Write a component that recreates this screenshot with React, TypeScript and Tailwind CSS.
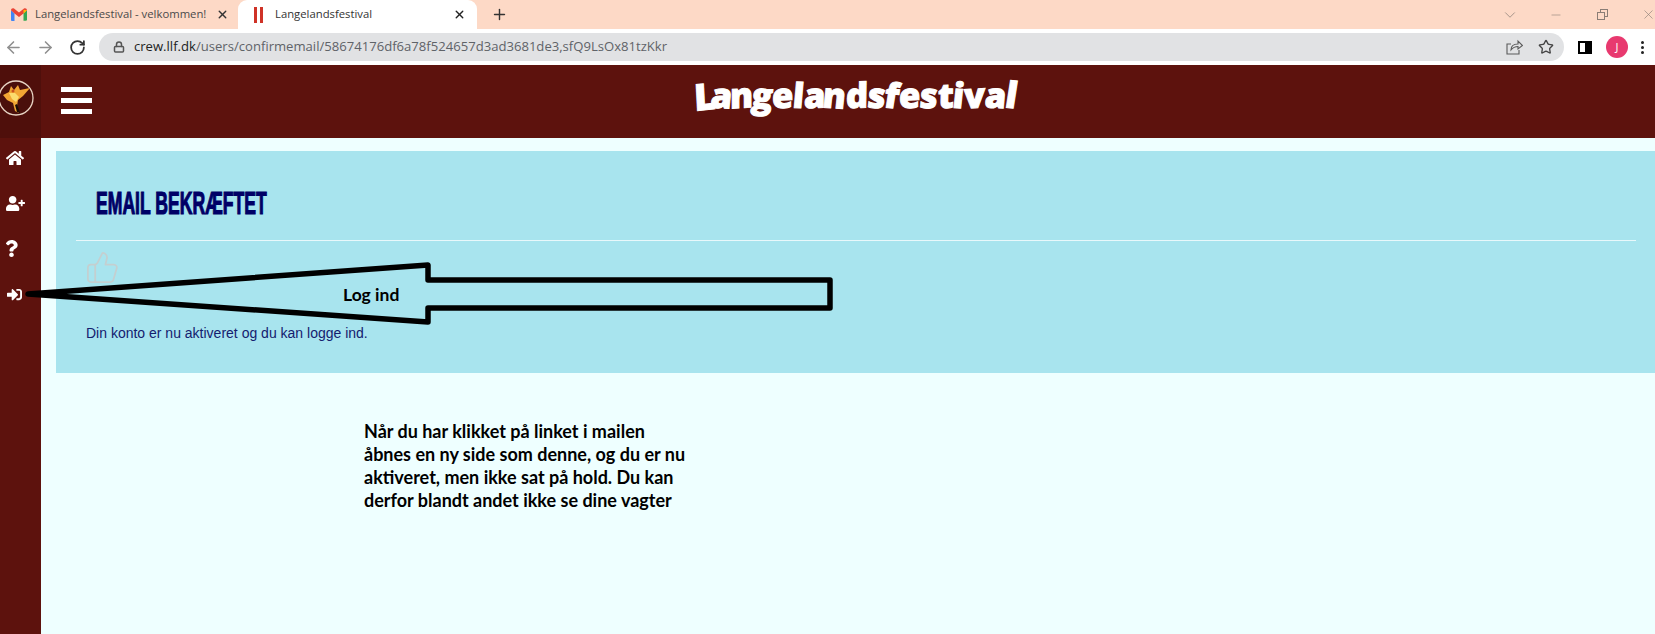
import { ArrowLeft, ArrowRight, ChevronDown, Lock, Minus, Plus, RotateCw, Star, ThumbsUp, X } from "lucide-react";
import { FaHome, FaQuestion, FaSignInAlt, FaUserPlus } from "react-icons/fa";

const logoLetters = [
  { c: "L", cls: "-rotate-6 text-[37px]" },
  { c: "a", cls: "rotate-3 -ml-[4px]" },
  { c: "n", cls: "-rotate-3 -ml-[2px]" },
  { c: "g", cls: "rotate-3 -ml-[1px]" },
  { c: "e", cls: "-rotate-3" },
  { c: "l", cls: "rotate-2" },
  { c: "a", cls: "-rotate-2" },
  { c: "n", cls: "rotate-3 -ml-[2px]" },
  { c: "d", cls: "-rotate-2" },
  { c: "s", cls: "rotate-3" },
  { c: "f", cls: "rotate-6" },
  { c: "e", cls: "-rotate-3" },
  { c: "s", cls: "rotate-2" },
  { c: "t", cls: "-rotate-2" },
  { c: "i", cls: "rotate-3" },
  { c: "v", cls: "-rotate-3" },
  { c: "a", cls: "rotate-2" },
  { c: "l", cls: "rotate-6 text-[36px]" },
];

function GmailIcon() {
  return (
    <svg width="16" height="13" viewBox="0 0 16 13" className="shrink-0">
      <path d="M0 2v9.500A1.200 1.200 0 0 0 1.200 13H3.500V5.500z" fill="#4285f4" />
      <path d="M16 2v9.500a1.200 1.200 0 0 1-1.200 1.200h-2.300V5.500z" fill="#34a853" />
      <path d="M0 2.200C0 .6 1.800-.4 3 .6l5 3.900L13 .6c1.200-1 3 0 3 1.600L12.500 5.500 8 9 3.500 5.500z" fill="#ea4335" />
      <path d="M12.500 1.700 16 2.200 12.500 5.500z" fill="#fbbc04" />
    </svg>
  );
}

function FestivalLogo() {
  return (
    <svg width="36" height="38" viewBox="0 0 36 38">
      <circle cx="16" cy="19" r="17" fill="#4a0f0b" stroke="#e8d4c4" strokeWidth="1.300" />
      <path d="M3 16l6-3 2-6 3 4 4-5 2 5 10-2-7 8-5 4-1 6 2 7-4-2-2-8-6-3z" fill="#f2a634" />
      <path d="M9 14l6 0 4 4-3 5-4-3z" fill="#fbdc6e" />
      <path d="M17 25l3 9-3-1-2-7z" fill="#1a0b06" />
      <circle cx="13" cy="12" r="1.500" fill="#c9511f" />
    </svg>
  );
}

function TabStrip() {
  return (
    <div className="flex h-[29px] shrink-0 items-stretch bg-[#fdd9c6] font-['Open_Sans',sans-serif] text-[11.300px] text-[#4a4a4a]">
      <div className="flex w-[238px] items-center pl-[11px] pr-[8px]">
        <GmailIcon />
        <span className="ml-[8px] w-[173px] whitespace-nowrap">Langelandsfestival - velkommen!</span>
        <X size={13} strokeWidth={2.500} className="ml-[8px] text-[#333]" />
      </div>
      <div className="flex w-[239px] items-center rounded-t-[9px] bg-white pl-[16px] pr-[11px]">
        <div className="flex gap-[3px]">
          <span className="h-[16px] w-[3px] bg-[#cf3227]" />
          <span className="h-[16px] w-[3px] bg-[#cf3227]" />
        </div>
        <span className="ml-[12px] flex-1 text-[#333]">Langelandsfestival</span>
        <X size={13} strokeWidth={2.500} className="text-[#222]" />
      </div>
      <div className="flex items-center pl-[14px]">
        <Plus size={17} strokeWidth={2} className="text-[#333]" />
      </div>
      <div className="-mr-[16px] ml-auto flex items-center text-[#8a7d75]">
        <div className="flex w-[46px] justify-center">
          <ChevronDown size={18} strokeWidth={1} />
        </div>
        <div className="flex w-[46px] justify-center">
          <Minus size={14} strokeWidth={1} />
        </div>
        <div className="flex w-[46px] justify-center">
          <div className="relative size-[11px]">
            <span className="absolute right-0 top-0 size-[8px] border border-[#8a7d75]" />
            <span className="absolute bottom-0 left-0 size-[8px] border border-[#8a7d75] bg-[#fdd9c6]" />
          </div>
        </div>
        <div className="flex w-[46px] justify-center">
          <X size={15} strokeWidth={1} />
        </div>
      </div>
    </div>
  );
}

function Toolbar() {
  return (
    <div className="flex h-[36px] shrink-0 items-center bg-white pl-[4px] font-['Open_Sans',sans-serif]">
      <ArrowLeft size={19} className="text-[#8f8f8f]" />
      <ArrowRight size={19} className="ml-[13px] text-[#8f8f8f]" />
      <RotateCw size={17} strokeWidth={2.500} className="ml-[14px] text-[#333]" />
      <div className="ml-[13px] flex h-[28px] w-[1465px] items-center rounded-full bg-[#e1e2e4] pl-[14px] pr-[10px]">
        <Lock size={12} strokeWidth={3} className="text-[#555]" />
        <span className="ml-[9px] text-[13.100px] text-[#5f6368]">
          <span className="text-[#222]">crew.llf.dk</span>/users/confirmemail/58674176df6a78f524657d3ad3681de3,sfQ9LsOx81tzKkr
        </span>
        <div className="ml-auto flex items-center gap-[15px]">
          <svg width="17" height="16" viewBox="0 0 17 16" fill="none" stroke="#5a5a5a" strokeWidth="1.100">
            <path d="M13 11v4H1V5h4" />
            <path d="M5 11c0-4 3-6 7-6V2l4.500 4.500L12 10V7.500c-3 0-5 1-7 3.500z" />
          </svg>
          <Star size={16} strokeWidth={2} className="text-[#444]" />
        </div>
      </div>
      <div className="ml-[14px] flex h-[13px] w-[14px] justify-end border-2 border-black bg-white">
        <span className="h-full w-[5px] bg-black" />
      </div>
      <div className="ml-[14px] flex size-[22px] items-center justify-center rounded-full bg-[#e8396f] text-[11px] text-white">J</div>
      <div className="ml-[13px] flex flex-col gap-[2px]">
        <span className="size-[3px] rounded-full bg-[#222]" />
        <span className="size-[3px] rounded-full bg-[#222]" />
        <span className="size-[3px] rounded-full bg-[#222]" />
      </div>
    </div>
  );
}

function SiteHeader() {
  return (
    <header className="flex h-[73px] shrink-0 bg-[#5d120d]">
      <div className="flex h-full w-[41px] items-center justify-start bg-[#4f0f0b] pb-[7px]">
        <FestivalLogo />
      </div>
      <div className="ml-[20px] mt-[22px] flex h-[27px] w-[31px] flex-col gap-[6px]">
        <span className="h-[5px] bg-white" />
        <span className="h-[5px] bg-white" />
        <span className="h-[5px] bg-white" />
      </div>
      <div className="ml-[602px] mt-[10px] flex h-[40px] -skew-x-3 items-center font-['Open_Sans',sans-serif] text-[34.500px] font-extrabold leading-none tracking-[-0.4px] text-white [-webkit-text-stroke:1px_#ffffff]">
        {logoLetters.map((l, i) => (
          <span key={i} className={`inline-block ${l.cls}`}>
            {l.c}
          </span>
        ))}
      </div>
    </header>
  );
}

function Sidebar() {
  return (
    <nav className="flex w-[41px] shrink-0 flex-col items-start gap-[27px] bg-[#5d120d] pl-[6px] pt-[11px] text-white">
      <FaHome size={18} />
      <FaUserPlus size={19} />
      <FaQuestion size={17} className="-ml-[3px]" />
      <FaSignInAlt size={15} className="ml-[1px] mt-[3px]" />
    </nav>
  );
}

export default function App() {
  return (
    <div className="relative flex h-[634px] w-[1655px] flex-col overflow-hidden bg-[#eeffff]">
      <TabStrip />
      <Toolbar />
      <SiteHeader />
      <div className="flex flex-1">
        <Sidebar />
        <main className="flex-1 pl-[15px] pt-[13px]">
          <section className="h-[222px] bg-[#a8e4ee] pl-[20px] pr-[19px]">
            <h1 className="ml-[20px] origin-left scale-x-[0.55] whitespace-nowrap pt-[37px] font-['Liberation_Sans',sans-serif] text-[32px] font-bold leading-[30px] text-[#000066] [-webkit-text-stroke:1.200px_#000066]">
              EMAIL BEKRÆFTET
            </h1>
            <hr className="mt-[22px] border-t border-[#e8f8fb]" />
            <ThumbsUp size={35} strokeWidth={1.200} className="ml-[9px] mt-[9px] text-[#c4cfd0]" />
            <p className="ml-[10px] mt-[39px] font-['Liberation_Sans',sans-serif] text-[14px] leading-[18px] text-[#14206e]">
              Din konto er nu aktiveret og du kan logge ind.
            </p>
          </section>
          <p className="ml-[308px] mt-[47px] font-['Lato',sans-serif] text-[18px] font-bold leading-[23px] text-black">
            Når du har klikket på linket i mailen
            <br />
            åbnes en ny side som denne, og du er nu
            <br />
            aktiveret, men ikke sat på hold. Du kan
            <br />
            derfor blandt andet ikke se dine vagter
          </p>
        </main>
      </div>

      {/* annotation drawn over the screenshot */}
      <svg width="1655" height="634" viewBox="0 0 1655 634" className="pointer-events-none absolute left-0 top-0">
        <path
          d="M28 294 L428 265 L428 280 L830 280 L830 308 L428 308 L428 322 Z"
          fill="none"
          stroke="#000"
          strokeWidth="5.500"
          strokeLinejoin="round"
        />
      </svg>
      <span className="absolute left-[343px] top-[283px] font-['Lato',sans-serif] text-[17.500px] font-bold leading-[23px] text-black">
        Log ind
      </span>
    </div>
  );
}
